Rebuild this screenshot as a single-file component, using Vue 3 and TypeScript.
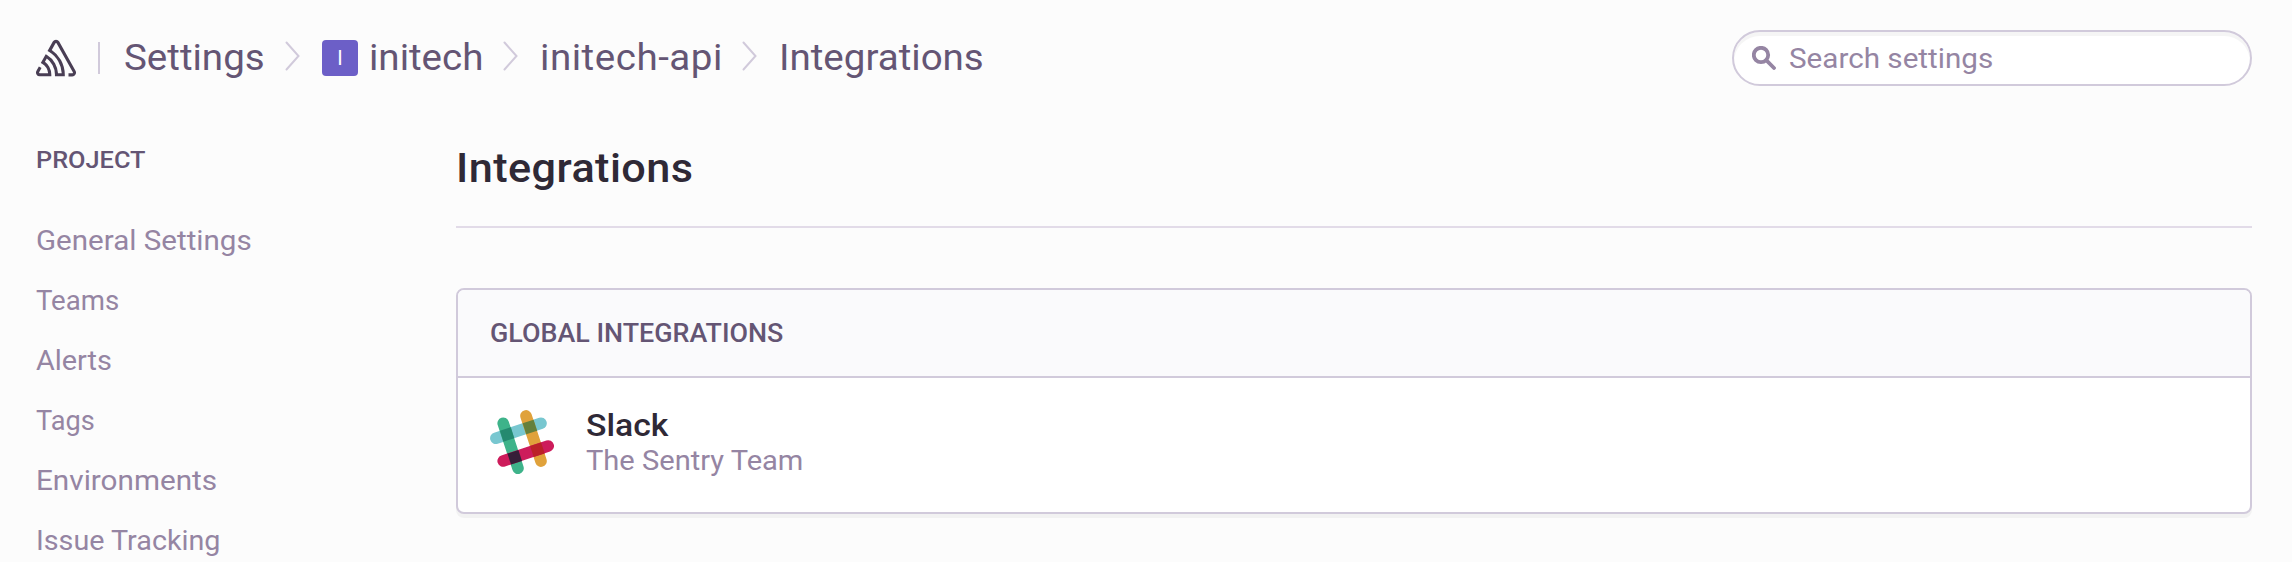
<script setup lang="ts">
interface NavItem {
  label: string
  cls: string
}

const navItems: NavItem[] = [
  { label: 'General Settings', cls: 'general' },
  { label: 'Teams', cls: 'teams' },
  { label: 'Alerts', cls: 'alerts' },
  { label: 'Tags', cls: 'tags' },
  { label: 'Environments', cls: 'environments' },
  { label: 'Issue Tracking', cls: 'tracking' },
]
</script>

<template>
  <div class="page">
    <header class="topbar">
      <svg class="logo" viewBox="0 0 16 16" aria-label="Sentry">
        <path
          d="M15.8,14.57a1.53,1.53,0,0,0,0-1.52L9.28,1.43a1.46,1.46,0,0,0-2.56,0L4.61,5.18l.54.32A10.43,10.43,0,0,1,8.92,9.39a10.84,10.84,0,0,1,1.37,4.67H8.81a9.29,9.29,0,0,0-1.16-3.91A9,9,0,0,0,4.41,6.81L3.88,6.49,1.91,10l.53.32a5.12,5.12,0,0,1,2.42,3.73H1.48a.25.25,0,0,1-.21-.12.24.24,0,0,1,0-.25L2.21,12a3.32,3.32,0,0,0-1.07-.63L.2,13.05a1.53,1.53,0,0,0,0,1.52,1.46,1.46,0,0,0,1.28.76H6.13V14.7a6.55,6.55,0,0,0-.82-3.16,6.31,6.31,0,0,0-1.73-2l.74-1.32a7.85,7.85,0,0,1,2.26,2.53,8,8,0,0,1,1,3.92v.63h3.94V14.7A12.14,12.14,0,0,0,10,8.75a11.8,11.8,0,0,0-3.7-4l1.5-2.67a.24.24,0,0,1,.42,0l6.52,11.63a.24.24,0,0,1,0,.25.24.24,0,0,1-.21.12H13c0,.43,0,.85,0,1.28h1.5a1.53,1.53,0,0,0,1.28-.76"
        />
      </svg>
      <span class="divider"></span>
      <nav class="crumbs">
        <a class="crumb settings">Settings</a>
        <svg class="chevron" viewBox="0 0 15 30"><path d="M1.5 1.5 13.5 15 1.5 28.5" /></svg>
        <span class="avatar">I</span>
        <a class="crumb org">initech</a>
        <svg class="chevron" viewBox="0 0 15 30"><path d="M1.5 1.5 13.5 15 1.5 28.5" /></svg>
        <a class="crumb project">initech-api</a>
        <svg class="chevron" viewBox="0 0 15 30"><path d="M1.5 1.5 13.5 15 1.5 28.5" /></svg>
        <a class="crumb view">Integrations</a>
      </nav>
      <label class="search">
        <svg class="glass" viewBox="0 0 24 24">
          <circle cx="9" cy="9" r="7.2" />
          <path d="M14.2 14.2 22 22" />
        </svg>
        <span class="placeholder">Search settings</span>
      </label>
    </header>

    <div class="body">
      <aside class="sidebar">
        <h6 class="side-title">PROJECT</h6>
        <a v-for="item in navItems" :key="item.label" class="side-link" :class="item.cls">{{ item.label }}</a>
      </aside>
      <main class="content">
        <div class="title-bar">
          <h1 class="title">Integrations</h1>
        </div>
        <section class="panel">
          <div class="panel-head"><span class="panel-title">GLOBAL INTEGRATIONS</span></div>
          <div class="panel-row">
            <svg class="slack" viewBox="0 0 64 64">
              <g fill="none" stroke-width="11.6" stroke-linecap="round">
                <path stroke="#78c7d0" d="M5.9 28.2 51 13.3" />
                <path stroke="#e0a23b" d="M36 5.9 51 51.1" />
                <path stroke="#3eb38a" d="M13.2 13.3 28 58.2" />
                <path stroke="#cd1c5b" d="M13.2 51 58.2 36" />
              </g>
              <path fill="#24896f" d="M9.9 20.8 20.8 17.2 24.3 28.2 13.4 31.8z" />
              <path fill="#64803b" d="M32.6 13.3 43.6 9.7 47.2 20.7 36.2 24.3z" />
              <path fill="#361f38" d="M17.4 43.6 28.4 40 32 51 21 54.6z" />
              <path fill="#bb2129" d="M40.1 36 51.1 32.4 54.7 43.4 43.7 47z" />
            </svg>
            <div class="meta">
              <div class="name">Slack</div>
              <div class="author">The Sentry Team</div>
            </div>
          </div>
        </section>
      </main>
    </div>
  </div>
</template>

<style>
body {
  background: #fcfcfc;
  overflow: hidden;
}
</style>

<style scoped>
.page {
  width: 2292px;
  height: 562px;
  overflow: hidden;
  font-family: Roboto, "Liberation Sans", sans-serif;
  background: #fcfcfc;
  color: #2f2936;
}
.page * {
  box-sizing: border-box;
  white-space: nowrap;
}
.topbar {
  display: flex;
  align-items: center;
  height: 116px;
  padding: 0 40px 0 36px;
}
.logo {
  width: 40px;
  height: 40px;
  fill: #493e54;
}
.divider {
  width: 2px;
  height: 32px;
  margin: 0 24px 0 22px;
  background: #d1cadb;
}
.crumbs {
  display: flex;
  align-items: center;
}
.crumb {
  font-size: 36px;
  line-height: 42px;
  color: #645574;
  transform: scaleX(1.07);
  transform-origin: 0 50%;
}
.settings {
  width: 161px;
}
.org {
  width: 134px;
}
.project {
  width: 202px;
  letter-spacing: 0.5px;
}
.chevron {
  width: 15px;
  height: 30px;
  margin: -4px 22px 0 0;
  fill: none;
  stroke: #d1cadb;
  stroke-width: 2;
  stroke-linecap: round;
}
.avatar {
  display: flex;
  align-items: center;
  justify-content: center;
  width: 36px;
  height: 36px;
  margin-right: 11px;
  border-radius: 4px;
  background: #6c5fc7;
  color: #fff;
  font-size: 20px;
}
.search {
  display: flex;
  align-items: center;
  width: 520px;
  height: 56px;
  margin-left: auto;
  padding-left: 18px;
  border: 2px solid #d1cadb;
  border-radius: 28px;
  background: #fff;
  box-shadow: inset 0 4px 0 rgba(0, 0, 0, 0.04);
}
.glass {
  width: 24px;
  height: 24px;
  fill: none;
  stroke: #9585a3;
  stroke-width: 3.8;
  stroke-linecap: round;
}
.placeholder {
  margin-left: 13px;
  padding-top: 1px;
  font-size: 28px;
  color: #9585a3;
  transform: scaleX(1.058);
  transform-origin: 0 50%;
}
.body {
  display: flex;
}
.sidebar {
  display: flex;
  flex: none;
  flex-direction: column;
  align-items: flex-start;
  width: 456px;
  padding: 29px 0 0 36px;
}
.side-title {
  margin: 0 0 36px;
  font-size: 24px;
  line-height: 30px;
  font-weight: 500;
  color: #645574;
  transform: scaleX(1.055);
  transform-origin: 0 50%;
}
.side-link {
  flex: none;
  height: 60px;
  font-size: 28px;
  line-height: 60px;
  color: #9585a3;
  transform-origin: 0 50%;
}
.general {
  transform: scaleX(1.055);
}
.teams {
  transform: scaleX(0.985);
}
.alerts {
  transform: scaleX(1.03);
}
.tags {
  transform: scaleX(0.97);
}
.environments {
  transform: scaleX(1.06);
}
.tracking {
  transform: scaleX(1.025);
}
.content {
  flex: none;
  width: 1796px;
}
.title-bar {
  height: 112px;
  margin-bottom: 60px;
  padding-top: 29px;
  border-bottom: 2px solid #e2dbe8;
}
.title {
  margin: 0;
  width: max-content;
  font-size: 40px;
  line-height: 48px;
  font-weight: 500;
  letter-spacing: 0.4px;
  transform: scaleX(1.08);
  transform-origin: 0 50%;
}
.panel {
  height: 226px;
  border: 2px solid #d1cadb;
  border-radius: 8px;
  background: #fff;
  box-shadow: 0 4px 0 rgba(0, 0, 0, 0.04);
  overflow: hidden;
}
.panel-head {
  height: 88px;
  padding-left: 32px;
  border-bottom: 2px solid #d1cadb;
  background: #fafafc;
}
.panel-title {
  display: inline-block;
  font-size: 26px;
  line-height: 86px;
  font-weight: 500;
  color: #645574;
  transform: scaleX(1.033);
  transform-origin: 0 50%;
}
.panel-row {
  display: flex;
  padding: 32px;
}
.slack {
  width: 64px;
  height: 64px;
}
.meta {
  margin: -3px 0 0 32px;
}
.name {
  height: 37px;
  font-size: 32px;
  line-height: 36px;
  font-weight: 500;
  transform: scaleX(1.055);
  transform-origin: 0 50%;
}
.author {
  font-size: 28px;
  line-height: 33px;
  color: #9585a3;
  transform: scaleX(1.038);
  transform-origin: 0 50%;
}
</style>
